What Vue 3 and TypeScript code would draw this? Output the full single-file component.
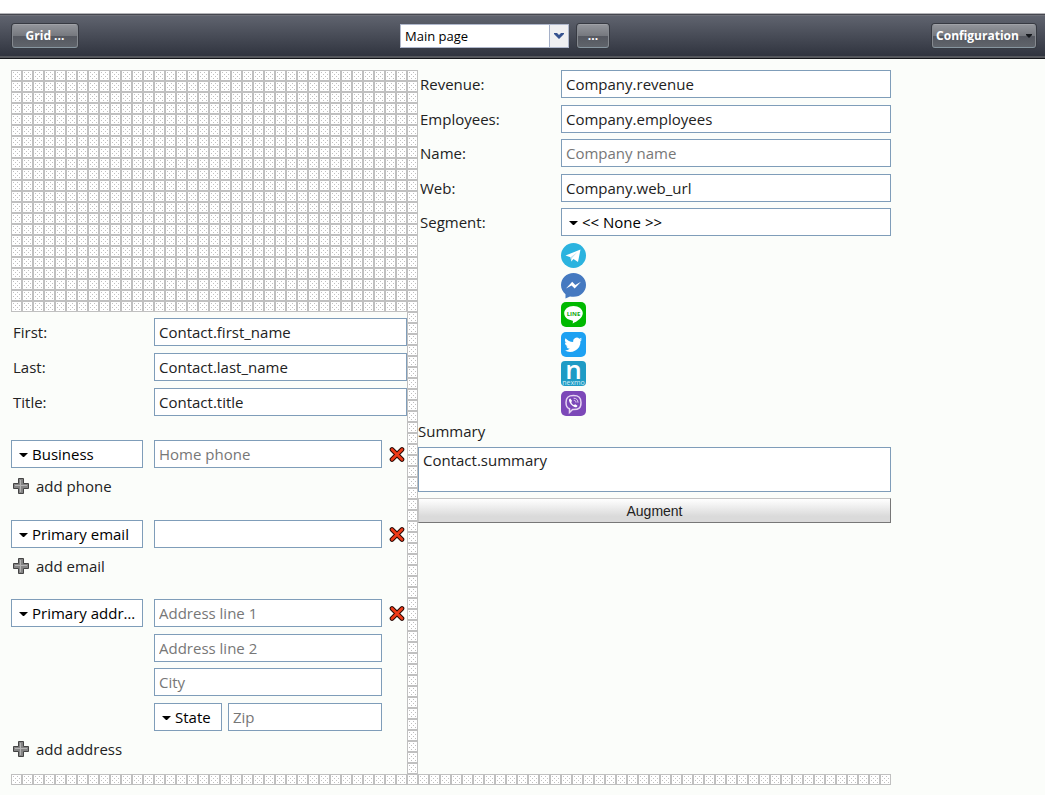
<script setup lang="ts">
import { ref } from 'vue'

interface Field {
  id: string
  label: string
  value: string
  placeholder?: string
}

const companyFields = ref<Field[]>([
  { id: 'revenue', label: 'Revenue:', value: 'Company.revenue' },
  { id: 'employees', label: 'Employees:', value: 'Company.employees' },
  { id: 'name', label: 'Name:', value: '', placeholder: 'Company name' },
  { id: 'web', label: 'Web:', value: 'Company.web_url' },
])

const contactFields = ref<Field[]>([
  { id: 'first', label: 'First:', value: 'Contact.first_name' },
  { id: 'last', label: 'Last:', value: 'Contact.last_name' },
  { id: 'title', label: 'Title:', value: 'Contact.title' },
])

const page = ref('Main page')
const summary = ref('Contact.summary')
</script>

<template>
  <div class="app">
    <header class="toolbar">
      <div class="side">
        <button type="button" class="tool grid-tool">Grid ...</button>
      </div>
      <div class="middle">
        <div class="combo">
          <select v-model="page" aria-label="Page">
            <option>Main page</option>
          </select>
          <span class="combo-arrow">
            <svg width="10" height="6" viewBox="0 0 10 6"><path d="M0 0H3L5 2L7 0H10V1L5 6L0 1Z" fill="#36528f" /></svg>
          </span>
        </div>
        <button type="button" class="tool more-tool">...</button>
      </div>
      <div class="side end">
        <button type="button" class="tool config-tool">
          Configuration
          <svg width="6" height="4" viewBox="0 0 6 4"><path d="M0 0H6V1L3 4L0 1Z" fill="#15181d" /></svg>
        </button>
      </div>
    </header>

    <main class="designer">
      <section class="left">
        <svg class="cells block"><rect width="100%" height="100%" fill="url(#cell)" /></svg>
        <div class="left-body">
          <form class="contact" @submit.prevent>
            <div class="rows names">
              <div v-for="f in contactFields" :key="f.id" class="row">
                <label :for="f.id">{{ f.label }}</label>
                <input :id="f.id" v-model="f.value" type="text">
              </div>
            </div>

            <div class="group">
              <div class="row removable">
                <div class="picker">
                  <select aria-label="Phone type"><option>Business</option></select>
                  <svg class="caret"><use href="#caret" /></svg>
                </div>
                <input type="text" placeholder="Home phone" aria-label="Phone">
                <button type="button" class="remove" aria-label="Remove phone"><svg><use href="#cross" /></svg></button>
              </div>
              <button type="button" class="add"><svg><use href="#plus" /></svg>add phone</button>
            </div>

            <div class="group">
              <div class="row removable">
                <div class="picker">
                  <select aria-label="Email type"><option>Primary email</option></select>
                  <svg class="caret"><use href="#caret" /></svg>
                </div>
                <input type="text" aria-label="Email">
                <button type="button" class="remove" aria-label="Remove email"><svg><use href="#cross" /></svg></button>
              </div>
              <button type="button" class="add"><svg><use href="#plus" /></svg>add email</button>
            </div>

            <div class="group">
              <div class="row removable top">
                <div class="picker">
                  <select aria-label="Address type"><option>Primary address</option></select>
                  <svg class="caret"><use href="#caret" /></svg>
                </div>
                <div class="rows address">
                  <input type="text" placeholder="Address line 1" aria-label="Address line 1">
                  <input type="text" placeholder="Address line 2" aria-label="Address line 2">
                  <input type="text" placeholder="City" aria-label="City">
                  <div class="region">
                    <div class="picker">
                      <select aria-label="State"><option>State</option></select>
                      <svg class="caret"><use href="#caret" /></svg>
                    </div>
                    <input type="text" placeholder="Zip" aria-label="Zip">
                  </div>
                </div>
                <button type="button" class="remove" aria-label="Remove address"><svg><use href="#cross" /></svg></button>
              </div>
              <button type="button" class="add"><svg><use href="#plus" /></svg>add address</button>
            </div>
          </form>
          <svg class="cells strip"><rect width="100%" height="100%" fill="url(#cell)" /></svg>
        </div>
      </section>

      <section class="right">
        <div class="rows company">
          <div v-for="f in companyFields" :key="f.id" class="row">
            <label :for="f.id">{{ f.label }}</label>
            <input :id="f.id" v-model="f.value" type="text" :placeholder="f.placeholder">
          </div>
          <div class="row">
            <label for="segment">Segment:</label>
            <div class="picker">
              <select id="segment"><option>&lt;&lt; None &gt;&gt;</option></select>
              <svg class="caret"><use href="#caret" /></svg>
            </div>
          </div>
        </div>

        <div class="socials">
          <a href="#" aria-label="Telegram">
            <svg viewBox="0 0 25 25">
              <circle cx="12.500" cy="12.500" r="12.500" fill="#2bb3df" />
              <path d="M4.500 12.500L19.500 6.500L17 19L12.500 16L10.300 18.500L9.500 14.300Z" fill="#fff" />
              <path d="M9.500 14.300L16.500 9L11 15L10.300 18.500Z" fill="#bfe0ef" />
            </svg>
          </a>
          <a href="#" aria-label="Messenger">
            <svg viewBox="0 0 25 25">
              <path d="M12.500 0C5.500 0 0 5.200 0 12C0 15.600 1.700 19 4.500 21.200V25.500L9 23.400C18 25.500 25 19.600 25 12C25 5.200 19.500 0 12.500 0Z" fill="#4579c0" />
              <path d="M5 15.500L11.200 8.800L14.300 12L20 8.800L13.700 15.600L10.600 12.400Z" fill="#fff" />
            </svg>
          </a>
          <a href="#" aria-label="Line">
            <svg viewBox="0 0 25 25">
              <rect width="25" height="25" rx="5" fill="#00b900" />
              <path d="M12.500 4C7.300 4 3.200 7.200 3.200 11.300C3.200 15 6.500 17.900 11 18.500C12.400 18.700 11.900 19.700 11.700 21.500C16 19.500 21.800 15.700 21.800 11.300C21.800 7.200 17.700 4 12.500 4Z" fill="#fff" />
              <text x="12.500" y="13.500" text-anchor="middle" class="line-mark">LINE</text>
            </svg>
          </a>
          <a href="#" aria-label="Twitter">
            <svg viewBox="0 0 25 25">
              <rect width="25" height="25" rx="5" fill="#1da1f2" />
              <path transform="translate(3.500 3.500) scale(.75)" d="M23.600 4.900a9.600 9.600 0 0 1-2.800.8 4.900 4.900 0 0 0 2.100-2.700 9.700 9.700 0 0 1-3.100 1.200 4.900 4.900 0 0 0-8.300 4.400A13.900 13.900 0 0 1 1.400 3.500a4.900 4.900 0 0 0 1.500 6.500 4.900 4.900 0 0 1-2.200-.6 4.900 4.900 0 0 0 3.900 4.900 4.900 4.900 0 0 1-2.200.1 4.900 4.900 0 0 0 4.600 3.400A9.800 9.800 0 0 1 0 19.800 13.900 13.900 0 0 0 21.300 7.400a9.900 9.900 0 0 0 2.300-2.500Z" fill="#fff" />
            </svg>
          </a>
          <a href="#" aria-label="Nexmo">
            <svg viewBox="0 0 25 25">
              <rect width="25" height="25" rx="4" fill="#1e9bc5" />
              <text x="12.500" y="17.500" text-anchor="middle" class="nexmo-mark">n</text>
              <text x="12.500" y="24" text-anchor="middle" class="nexmo">nexmo</text>
            </svg>
          </a>
          <a href="#" aria-label="Viber">
            <svg viewBox="0 0 25 25">
              <rect width="25" height="25" rx="5" fill="#7c48b8" />
              <path d="M12.500 4.500C7 4.500 5 6.500 5 11.500C5 15 6 17 8.500 17.800V21.500L11.600 18.500C18 18.800 20 17 20 11.500C20 6.500 18 4.500 12.500 4.500Z" fill="none" stroke="#e6d5f2" stroke-width="1.500" />
              <path d="M9.300 7.500L11 9.800L10.300 11.300C10.700 12.800 11.700 13.700 13 14.100L14.200 13.200L16.500 14.800C16 16.400 14.900 16.700 13.500 16C10.500 14.500 8.600 12.300 8 9.500C7.900 8.500 8.500 7.800 9.300 7.500Z" fill="#fff" />
              <path d="M12.600 7.200C15.400 7.200 17 8.900 17 11.700M12.800 9.300C14.300 9.300 15 10.200 15 11.500" fill="none" stroke="#e6d5f2" />
            </svg>
          </a>
        </div>

        <label class="summary-label" for="summary">Summary</label>
        <textarea id="summary" v-model="summary" />
        <button type="button" class="augment">Augment</button>
      </section>

      <svg class="cells footer-strip"><rect width="100%" height="100%" fill="url(#cell)" /></svg>
    </main>

    <svg class="defs" aria-hidden="true">
      <defs>
        <pattern id="cell" width="11" height="11" patternUnits="userSpaceOnUse">
          <rect width="11" height="11" fill="#c0c0c0" />
          <rect x="1" y="1" width="9" height="9" fill="#fff" />
          <path d="M2 2h1v1h-1zM6 2h1v1h-1zM4 4h1v1h-1zM8 4h1v1h-1zM2 6h1v1h-1zM6 6h1v1h-1zM4 8h1v1h-1zM8 8h1v1h-1z" fill="#c0c0c0" />
        </pattern>
      </defs>
      <symbol id="caret" viewBox="0 0 9 4"><path d="M0 0H9L5 4H4Z" fill="#000" /></symbol>
      <symbol id="plus" viewBox="0 0 16 16">
        <path d="M5.500 0.500H10.500V5.500H15.500V10.500H10.500V15.500H5.500V10.500H0.500V5.500H5.500Z" fill="#858585" stroke="#444" />
        <path d="M7 2H8V7H14V8H8V14H7V8H2V7H7Z" fill="#b4b4b4" />
      </symbol>
      <symbol id="cross" viewBox="0 0 16 15">
        <path d="M3 2.500L13 12.500M13 2.500L3 12.500" fill="none" stroke="#2a0a05" stroke-width="4.600" stroke-linecap="round" />
        <path d="M3 2.500L13 12.500M13 2.500L3 12.500" fill="none" stroke="#f03a17" stroke-width="2.600" stroke-linecap="round" />
      </symbol>
    </svg>
  </div>
</template>

<style>
body {
  background: #fbfdfa;
}
</style>

<style scoped>
.app {
  font: 15px/20px "Open Sans", "Noto Sans", sans-serif;
  color: #222;
}

.app * {
  box-sizing: border-box;
}

button,
input,
select,
textarea {
  margin: 0;
  font: inherit;
  color: inherit;
}

/* toolbar */
.toolbar {
  display: grid;
  grid-template-columns: 388fr auto 427fr;
  align-items: center;
  height: 46px;
  padding: 0 9px 0 12px;
  border-top: 1px solid #b4b4b8;
  border-bottom: 1px solid #14161a;
  background: linear-gradient(#45474f 0 1px, #6e7078 1px 2px, #5f636e 2px, #30343f 42px, #55575c 42px);
  box-shadow: 0 -13px #fff;
  margin-top: 13px;
}

.side {
  display: flex;
}

.end {
  justify-content: flex-end;
}

.middle {
  display: flex;
  gap: 8px;
}

.tool {
  display: flex;
  align-items: center;
  justify-content: center;
  gap: 7px;
  height: 24px;
  padding: 0;
  border: 1px solid #91949a;
  border-color: #a0a2a7 #85898f #8796a0;
  border-radius: 3px;
  background: linear-gradient(#92949a, #75787e 50%, #555860 51%, #60646b);
  box-shadow: 0 0 0 1px #373a42;
  color: #fff;
  font-size: 12px;
  font-weight: 700;
}

.grid-tool {
  width: 66px;
}

.more-tool {
  width: 32px;
}

.config-tool {
  width: 104px;
}

.combo {
  position: relative;
  width: 169px;
}

.combo select {
  appearance: none;
  display: block;
  width: 100%;
  height: 24px;
  padding: 0 24px 0 4px;
  border: 1px solid #b0b8cc;
  border-radius: 0;
  background: #fff;
  color: #000;
  font-size: 13px;
}

.combo-arrow {
  position: absolute;
  top: 1px;
  right: 1px;
  bottom: 1px;
  display: flex;
  width: 19px;
  align-items: center;
  justify-content: center;
  border-left: 1px solid #a5b0c8;
  background: #efeff1;
  pointer-events: none;
}

/* designer */
.designer {
  display: grid;
  grid-template-columns: 37fr 43fr;
  max-width: 880px;
  margin: 11px 11px 10px;
}

.cells {
  display: block;
  width: 100%;
}

.block {
  height: 242px;
}

.left-body {
  display: flex;
}

.strip {
  width: 11px;
  height: auto;
  flex: none;
}

.footer-strip {
  grid-column: 1 / -1;
  height: 11px;
}

.contact {
  flex: 1;
  min-width: 0;
  padding: 6px 0 13px;
}

.rows {
  display: grid;
  align-content: space-between;
}

.names {
  min-height: 98px;
  margin-bottom: 24px;
}

.company {
  min-height: 166px;
}

.address {
  min-height: 132px;
}

.row {
  display: grid;
  grid-template-columns: 143px 1fr;
  align-items: center;
}

.row label {
  padding-left: 2px;
}

.removable {
  grid-template-columns: 143px 1fr 25px;
}

.removable > .picker {
  margin-right: 11px;
}

.top {
  align-items: start;
}

input,
select,
textarea {
  display: block;
  width: 100%;
  min-width: 0;
  border: 1px solid #7f9db9;
  border-radius: 0;
  background: #fff;
}

input,
.picker select {
  height: 28px;
  padding: 0 4px;
}

input::placeholder {
  color: #777;
  opacity: 1;
}

.picker {
  position: relative;
}

.picker select {
  appearance: none;
  padding: 0 2px 0 20px;
  color: #000;
  text-overflow: ellipsis;
}

.caret {
  position: absolute;
  top: 13px;
  left: 8px;
  width: 9px;
  height: 4px;
  pointer-events: none;
}

.region {
  display: grid;
  grid-template-columns: 68px 1fr;
  gap: 6px;
}

.remove {
  display: flex;
  align-items: center;
  justify-content: center;
  height: 28px;
  padding: 0 0 0 4px;
  border: 0;
  background: none;
}

.remove svg {
  flex: none;
  width: 16px;
  height: 15px;
}

.group + .group {
  margin-top: 22px;
}

.group:last-child {
  margin-top: 21px;
}

.add {
  display: flex;
  align-items: center;
  gap: 7px;
  height: 24px;
  margin-top: 6px;
  padding: 0 2px;
  border: 0;
  background: none;
}

.add svg {
  width: 16px;
  height: 16px;
}

/* right column */
.right {
  display: flex;
  flex-direction: column;
}

.socials {
  display: flex;
  flex-direction: column;
  justify-content: space-between;
  min-height: 173px;
  margin: 7px 0 5px 143px;
}

.socials a {
  width: 25px;
  height: 25px;
}

.socials svg {
  display: block;
  width: 25px;
  height: 25px;
  overflow: visible;
}

.line-mark {
  fill: #12a812;
  font-size: 6px;
  font-weight: 700;
}

.nexmo-mark {
  fill: #fff;
  font-size: 26px;
  font-weight: 600;
}

.nexmo {
  fill: #d5edf6;
  font-size: 7px;
}

textarea {
  height: 45px;
  margin-top: 6px;
  padding: 2px 4px;
  resize: none;
}

.augment {
  height: 25px;
  margin-top: 6px;
  border: 1px solid #777;
  border-top-color: #c4c4c4;
  border-left-color: #c4c4c4;
  background: linear-gradient(#fff, #dadada 75%);
  font: 14px/20px "Liberation Sans", Arial, sans-serif;
}

.defs {
  position: absolute;
  width: 0;
  height: 0;
}
</style>
